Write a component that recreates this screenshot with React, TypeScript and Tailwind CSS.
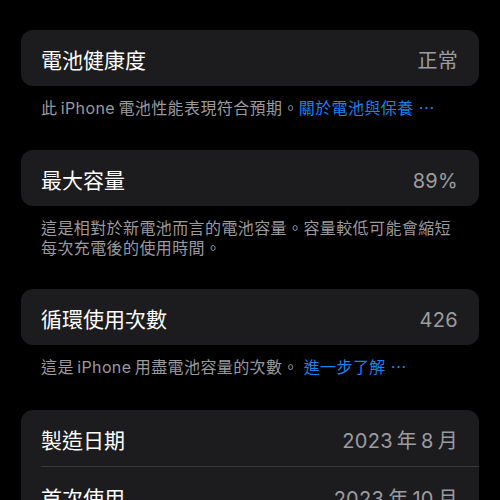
import React from 'react';

const font = { fontFamily: 'Inter, "Noto Sans CJK TC", sans-serif' };

function Row({ label, value }: { label: string; value: string }) {
  return (
    <div className="flex items-center justify-between h-[56px] pt-[6px] pr-[21px]">
      <span className="text-[21px] text-white">{label}</span>
      <span className="text-[20px] tracking-[0.3px] text-[#9c9ca1]">{value}</span>
    </div>
  );
}

function Card({ children }: { children: React.ReactNode }) {
  return <div className="rounded-[12px] bg-[#1c1c1e] pl-[20px] overflow-hidden">{children}</div>;
}

function Footer({ children }: { children: React.ReactNode }) {
  return (
    <p className="pl-[20px] pr-[16px] pt-[12px] text-[16px] leading-[20px] tracking-[0.4px] text-[#9a9a9f]">
      {children}
    </p>
  );
}

export default function App() {
  return (
    <div className="min-h-screen bg-black px-[21px] pt-[30px]" style={font}>
      <Card>
        <Row label="電池健康度" value="正常" />
      </Card>
      <Footer>
        此{'\u2009'}iPhone{'\u2009'}電池性能表現符合預期。<span className="text-[#1a82f0]">關於電池與保養 ⋯</span>
      </Footer>

      <div className="mt-[32px]">
        <Card>
          <Row label="最大容量" value="89%" />
        </Card>
        <Footer>這是相對於新電池而言的電池容量。容量較低可能會縮短每次充電後的使用時間。</Footer>
      </div>

      <div className="mt-[31px]">
        <Card>
          <Row label="循環使用次數" value="426" />
        </Card>
        <Footer>
          這是{'\u2009'}iPhone{'\u2009'}用盡電池容量的次數。 <span className="text-[#1a82f0]">進一步了解 ⋯</span>
        </Footer>
      </div>

      <div className="mt-[33px]">
        <Card>
          <div className="h-[57px] flex items-center justify-between pt-[6px] pr-[21px] border-b border-[#38383a]">
            <span className="text-[21px] text-white">製造日期</span>
            <span className="text-[20px] tracking-[0.3px] text-[#9c9ca1]">2023{'\u2009'}年{'\u2009'}8{'\u2009'}月</span>
          </div>
          <div className="h-[57px] flex items-center justify-between pt-[6px] pr-[21px]">
            <span className="text-[21px] text-white">首次使用</span>
            <span className="text-[20px] tracking-[0.3px] text-[#9c9ca1]">2023{'\u2009'}年{'\u2009'}10{'\u2009'}月</span>
          </div>
        </Card>
      </div>
    </div>
  );
}
